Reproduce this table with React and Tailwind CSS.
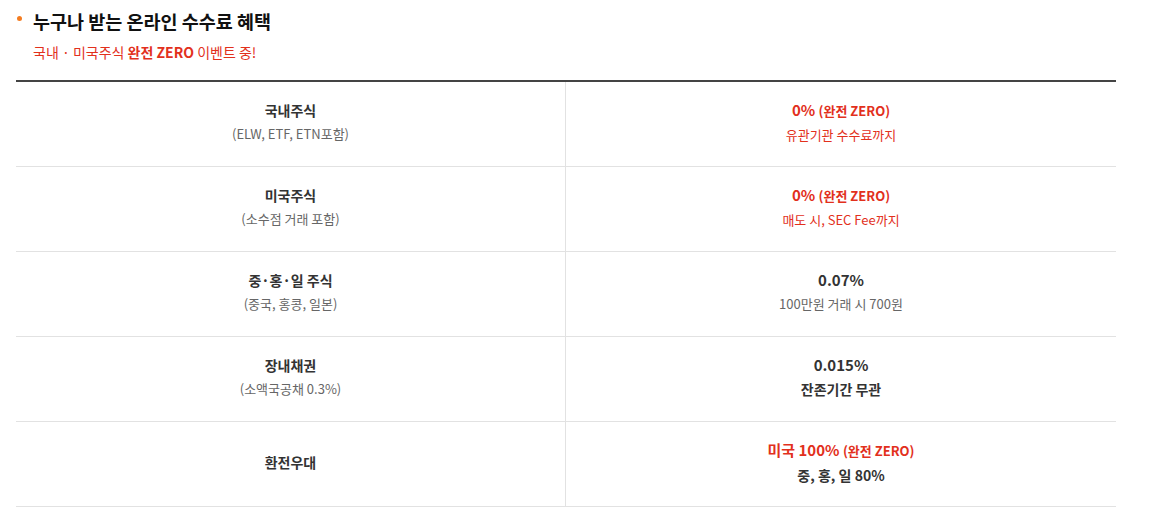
export default function App() {
  const font = { fontFamily: '"Noto Sans CJK KR", "Noto Sans", sans-serif' };
  const rows = [
    {
      l1: '국내주식',
      l2: '(ELW, ETF, ETN포함)',
      r: (
        <>
          <div className="text-[15px] font-bold text-[#e2301c] leading-[20px]">
            0% <span className="text-[13px]">(완전 ZERO)</span>
          </div>
          <div className="text-[13px] text-[#e2301c] leading-[20px] mt-[4px]">유관기관 수수료까지</div>
        </>
      ),
    },
    {
      l1: '미국주식',
      l2: '(소수점 거래 포함)',
      r: (
        <>
          <div className="text-[15px] font-bold text-[#e2301c] leading-[20px]">
            0% <span className="text-[13px]">(완전 ZERO)</span>
          </div>
          <div className="text-[13px] text-[#e2301c] leading-[20px] mt-[4px]">매도 시, SEC Fee까지</div>
        </>
      ),
    },
    {
      l1: '중·홍·일 주식',
      l2: '(중국, 홍콩, 일본)',
      r: (
        <>
          <div className="text-[15px] font-bold text-[#333] leading-[20px]">0.07%</div>
          <div className="text-[13px] text-[#666] leading-[20px] mt-[4px]">100만원 거래 시 700원</div>
        </>
      ),
    },
    {
      l1: '장내채권',
      l2: '(소액국공채 0.3%)',
      r: (
        <>
          <div className="text-[15px] font-bold text-[#333] leading-[20px]">0.015%</div>
          <div className="text-[14px] font-bold text-[#333] leading-[20px] mt-[4px]">잔존기간 무관</div>
        </>
      ),
    },
    {
      l1: '환전우대',
      l2: null,
      r: (
        <>
          <div className="text-[15px] font-bold text-[#e2301c] leading-[20px]">
            미국 100% <span className="text-[13px]">(완전 ZERO)</span>
          </div>
          <div className="text-[14px] font-bold text-[#333] leading-[20px] mt-[4px]">중, 홍, 일 80%</div>
        </>
      ),
    },
  ];
  return (
    <div className="w-[1172px] h-[519px] bg-white" style={font}>
      <div className="pl-[16px] w-[1116px]">
        <div className="flex items-center pt-[3px] h-[38px]">
          <span className="w-[5px] h-[5px] rounded-full bg-[#f47c20] ml-[1px] mr-[11px] mt-[-4px]"></span>
          <span className="text-[18.5px] font-bold text-[#111] leading-[24px]">누구나 받는 온라인 수수료 혜택</span>
        </div>
        <div className="pl-[17px] pt-[4px] text-[14px] text-[#e2301c] leading-[20px] h-[42px]">
          국내 · 미국주식 <b className="font-bold">완전 ZERO</b> 이벤트 중!
        </div>
        <div className="border-t-2 border-[#444]">
          {rows.map((row, i) => (
            <div key={i} className="grid grid-cols-2 h-[85px] border-b border-[#e2e2e2]">
              <div className="flex flex-col items-center justify-center pb-[4px] border-r border-[#e2e2e2]">
                <div className="text-[14px] font-bold text-[#333] leading-[20px]">{row.l1}</div>
                {row.l2 && (
                  <div className="text-[13px] text-[#666] leading-[20px] mt-[4px]">{row.l2}</div>
                )}
              </div>
              <div className="flex flex-col items-center justify-center pb-[4px]">{row.r}</div>
            </div>
          ))}
        </div>
      </div>
    </div>
  );
}
